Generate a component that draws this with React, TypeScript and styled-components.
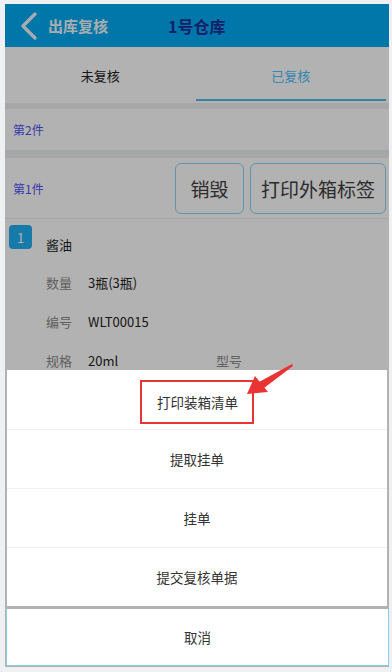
import styled, { createGlobalStyle } from 'styled-components';

const GlobalStyle = createGlobalStyle`
  html, body {
    margin: 0;
    padding: 0;
    background: #eef0f2;
  }
  body {
    font-family: "Noto Sans CJK SC", "Noto Sans", Roboto, sans-serif;
  }
`

const Frame = styled.div`
  width: 392px;
  height: 672px;
  box-sizing: border-box;
  padding: 4px 3px 5px 5px;
`

const Screen = styled.div`
  position: relative;
  height: 663px;
  background: #fff;
  overflow: hidden;
  display: flex;
  flex-direction: column;
`

const Header = styled.div`
  height: 43px;
  flex-shrink: 0;
  background: #00aaf2;
  display: flex;
  align-items: center;
`

const BackIcon = styled.svg`
  margin-left: 15px;
  width: 18px;
  height: 28px;
`

const Title = styled.div`
  margin-left: 10px;
  font-size: 15px;
  font-weight: 600;
  color: #f4f8fb;
`

const Warehouse = styled.div`
  margin-left: 60px;
  font-size: 16px;
  font-weight: 700;
  color: #1f2f98;
`

const Tabs = styled.div`
  height: 56px;
  flex-shrink: 0;
  display: flex;
  box-sizing: border-box;
  padding: 0 3px 2px 0;
`

const Tab = styled.div<{ $active?: boolean }>`
  flex: 1;
  display: flex;
  align-items: center;
  justify-content: center;
  padding-top: 4px;
  font-size: 13px;
  color: ${p => (p.$active ? '#4ec0fc' : '#222')};
  border-bottom: 2px solid ${p => (p.$active ? '#4cbaf0' : 'transparent')};
`

const Gap = styled.div<{ $h: number; $line?: boolean }>`
  height: ${p => p.$h}px;
  flex-shrink: 0;
  background: #f0f0f0;
  box-sizing: border-box;
  border-top: ${p => (p.$line ? '1px solid #e4f2f6' : '0')};
`

const GroupRow = styled.div<{ $h: number }>`
  height: ${p => p.$h}px;
  flex-shrink: 0;
  display: flex;
  align-items: center;
  justify-content: space-between;
  padding: 0 3px 0 8px;
  box-sizing: border-box;
  border-bottom: 1px solid #ececec;
`

const GroupLabel = styled.span`
  font-size: 12px;
  color: #4f4ff5;
`

const Buttons = styled.div`
  display: flex;
  gap: 6px;
`

const OutlineButton = styled.button<{ $w: number }>`
  width: ${p => p.$w}px;
  height: 51px;
  background: #fff;
  border: 1.5px solid #8fd4f2;
  border-radius: 6px;
  font-family: inherit;
  font-size: 19px;
  color: #404040;
  padding: 0;
`

const Item = styled.div`
  padding: 6px 0 0 4px;
`

const ItemHead = styled.div`
  display: flex;
  align-items: flex-start;
`

const Badge = styled.div`
  width: 23px;
  height: 24px;
  border-radius: 4px;
  background: #22b0f2;
  color: #fff;
  font-size: 13px;
  display: flex;
  align-items: center;
  justify-content: center;
`

const ItemName = styled.div`
  margin: 10px 0 0 14px;
  font-size: 13px;
  color: #222;
`

const Fields = styled.div`
  margin-top: 9px;
  padding-left: 37px;
`

const Field = styled.div`
  display: flex;
  align-items: center;
  height: 39px;
  font-size: 13px;
`

const FieldLabel = styled.span`
  color: #8a8a8a;
  width: 42px;
`

const FieldValue = styled.span<{ $w?: number }>`
  color: #222;
  width: ${p => (p.$w ? `${p.$w}px` : 'auto')};
`

const Mask = styled.div`
  position: absolute;
  inset: 0;
  background: rgba(0, 0, 0, 0.3);
`

const Sheet = styled.div`
  position: absolute;
  left: 1px;
  right: 0;
  bottom: 1px;
  display: flex;
  flex-direction: column;
  gap: 3px;
`

const Menu = styled.div`
  margin: 0 2px 0 1px;
  background: #fff;
`

const MenuItem = styled.div`
  height: 59px;
  display: flex;
  align-items: center;
  justify-content: center;
  font-size: 13.5px;
  color: #333;
  & + & {
    border-top: 1px solid #f0f0f0;
    height: 58px;
  }
`

const Highlight = styled.span`
  display: inline-block;
  margin-top: 4px;
  padding: 10px 14px 10px 15px;
  border: 2px solid #ea3434;
`

const Cancel = styled.div`
  height: 57px;
  background: #fff;
  display: flex;
  align-items: center;
  justify-content: center;
  font-size: 13.5px;
  color: #333;
  box-sizing: border-box;
  border: 1px solid #8ccbe8;
  border-top: 0;
`

const Arrow = styled.svg`
  position: absolute;
  left: 238px;
  top: 357px;
  width: 52px;
  height: 38px;
`

const menu = ['提取挂单', '挂单', '提交复核单据']

export default function App() {
  return (
    <>
      <GlobalStyle />
      <Frame>
        <Screen>
          <Header>
            <BackIcon viewBox="0 0 18 28">
              <polyline points="15,2 3,14 15,26" fill="none" stroke="#f4f8fb" strokeWidth="3.2" strokeLinecap="round" strokeLinejoin="round" />
            </BackIcon>
            <Title>出库复核</Title>
            <Warehouse>1号仓库</Warehouse>
          </Header>
          <Tabs>
            <Tab>未复核</Tab>
            <Tab $active>已复核</Tab>
          </Tabs>
          <Gap $h={6} />
          <GroupRow $h={42}>
            <GroupLabel>第2件</GroupLabel>
          </GroupRow>
          <Gap $h={7} $line />
          <GroupRow $h={61}>
            <GroupLabel>第1件</GroupLabel>
            <Buttons>
              <OutlineButton $w={69}>销毁</OutlineButton>
              <OutlineButton $w={136}>打印外箱标签</OutlineButton>
            </Buttons>
          </GroupRow>
          <Item>
            <ItemHead>
              <Badge>1</Badge>
              <ItemName>酱油</ItemName>
            </ItemHead>
            <Fields>
              <Field>
                <FieldLabel>数量</FieldLabel>
                <FieldValue>3瓶(3瓶)</FieldValue>
              </Field>
              <Field>
                <FieldLabel>编号</FieldLabel>
                <FieldValue>WLT00015</FieldValue>
              </Field>
              <Field>
                <FieldLabel>规格</FieldLabel>
                <FieldValue $w={128}>20ml</FieldValue>
                <FieldLabel>型号</FieldLabel>
              </Field>
            </Fields>
          </Item>

          <Mask />
          <Sheet>
            <Menu>
              <MenuItem>
                <Highlight>打印装箱清单</Highlight>
              </MenuItem>
              {menu.map(m => (
                <MenuItem key={m}>{m}</MenuItem>
              ))}
            </Menu>
            <Cancel>取消</Cancel>
          </Sheet>
          <Arrow viewBox="0 0 52 38">
            <polygon points="4,33 12,15 25,31" fill="#ea3434" />
            <polygon points="16,21 49,3 50,5 21,27" fill="#ea3434" />
          </Arrow>
        </Screen>
      </Frame>
    </>
  );
}
